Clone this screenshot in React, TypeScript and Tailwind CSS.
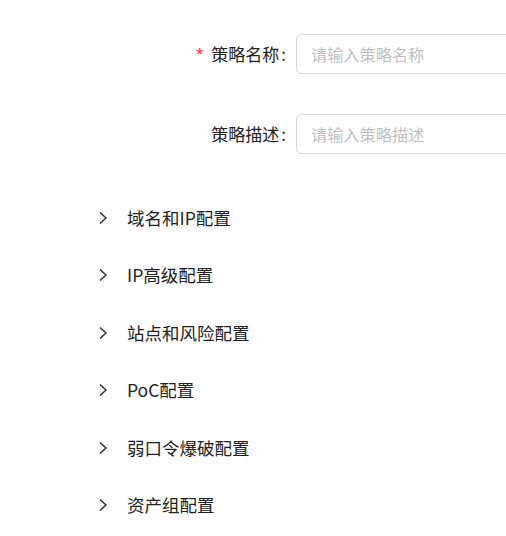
import React from 'react';

const font = { fontFamily: '"Noto Sans CJK SC", "Noto Sans", sans-serif' };

const sections = ['域名和IP配置', 'IP高级配置', '站点和风险配置', 'PoC配置', '弱口令爆破配置', '资产组配置'];

function Chevron() {
    return (
        <svg width="12" height="14" viewBox="0 0 12 14" className="shrink-0 text-[#2a2a2a]">
            <path d="M3 1.5 L9 7 L3 12.5" fill="none" stroke="currentColor" strokeWidth="1.4" />
        </svg>
    );
}

function FormItem({ label, placeholder, required }: { label: string; placeholder: string; required?: boolean }) {
    return (
        <div className="flex items-center h-10">
            <div className="w-[296px] shrink-0 flex justify-end items-center pr-[10px] text-[17px] text-[#222]">
                {required && <span className="text-[#ff4d4f] mr-[7px] text-[20px] leading-none mt-[4px]">*</span>}
                <span>{label}</span>
                <span className="ml-[2px]">:</span>
            </div>
            <div className="w-[320px] shrink-0 h-10 border border-[#d9d9d9] rounded-[5px] flex items-center px-[14px] text-[16.2px] text-[#bfbfbf]">
                {placeholder}
            </div>
        </div>
    );
}

export default function App() {
    return (
        <div className="w-full min-h-[536px] bg-white overflow-hidden" style={font}>
            {/* form */}
            <div className="pt-[34px] flex flex-col gap-10">
                <FormItem label="策略名称" placeholder="请输入策略名称" required />
                <FormItem label="策略描述" placeholder="请输入策略描述" />
            </div>

            {/* collapse sections */}
            <div className="mt-[35px]">
                {sections.map(name => (
                    <div key={name} className="h-[57.5px] flex items-center pl-[97px]">
                        <Chevron />
                        <span className="ml-[18px] text-[17.5px] text-[#222]">{name}</span>
                    </div>
                ))}
            </div>
        </div>
    );
}
